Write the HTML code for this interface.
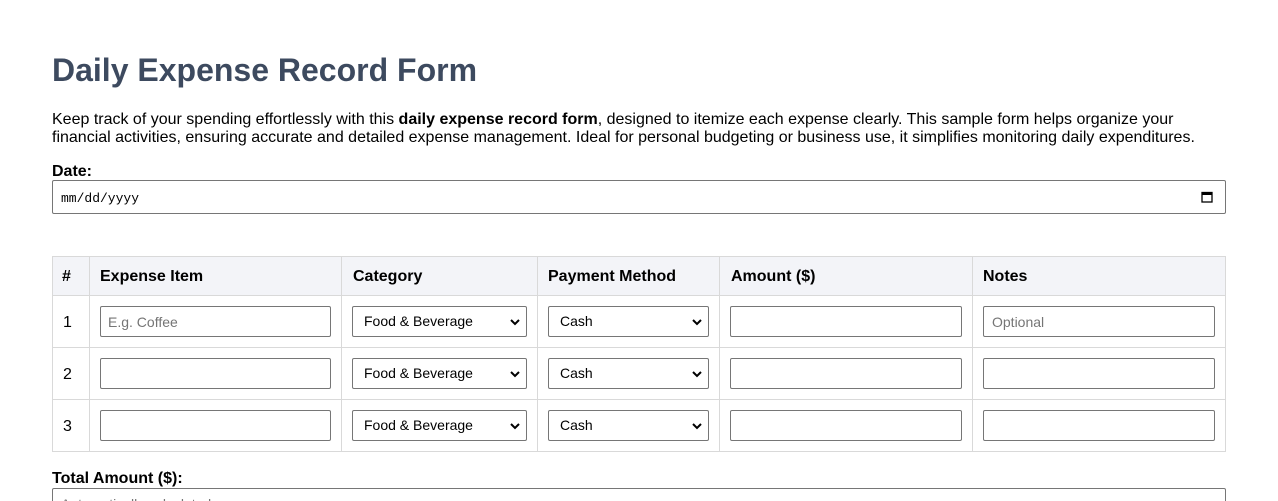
<!DOCTYPE html>
<html><head><meta charset="utf-8"><style>
*{box-sizing:border-box;margin:0;padding:0}
html,body{width:1278px;height:501px;overflow:hidden}
body{background:#fff;font-family:"Liberation Sans",Arial,sans-serif;color:#000;position:relative}
.a{position:absolute}
h1{position:absolute;left:52px;top:52px;font-size:32px;font-weight:bold;color:#3d4a5f;line-height:36px}
p.d{position:absolute;left:52px;top:111px;width:1180px;font-size:16px;line-height:18px}
.lbl{position:absolute;left:52px;font-size:16px;font-weight:bold}
.box{position:absolute;border:1px solid #767676;border-radius:2px;background:#fff;font-size:14px;color:#000}
.ph{color:#757575}
.sel{position:absolute;border:1px solid #767676;border-radius:2px;background:#fff;font-size:14px;padding-left:11px;line-height:29px;height:31px}
.sel svg{position:absolute;right:6px;top:11px}
.hl{position:absolute;left:52px;width:1174px;height:1px;background:#d9d9d9}
.vl{position:absolute;top:256px;height:196px;width:1px;background:#d9d9d9}
.th{position:absolute;top:268px;font-size:16px;font-weight:bold}
.n{position:absolute;left:63px;font-size:16px}
</style></head><body>
<h1>Daily Expense Record Form</h1>
<p class="d">Keep track of your spending effortlessly with this <b>daily expense record form</b>, designed to itemize each expense clearly. This sample form helps organize your financial activities, ensuring accurate and detailed expense management. Ideal for personal budgeting or business use, it simplifies monitoring daily expenditures.</p>
<div class="lbl" style="top:163px">Date:</div>
<div class="box" style="left:52px;top:180px;width:1174px;height:34px;font-family:'Liberation Mono',monospace;font-size:13px;padding:10px 0 0 8px">mm/dd/yyyy
<svg class="a" style="right:12px;top:10px" width="12" height="12" viewBox="0 0 12 12"><rect x="1" y="1.5" width="10" height="9.5" fill="none" stroke="#000" stroke-width="1.3"/><rect x="1" y="1.5" width="10" height="2.5" fill="#000"/></svg></div>

<div class="a" style="left:52px;top:256px;width:1174px;height:39px;background:#f3f4f8"></div>
<div class="hl" style="top:256px"></div><div class="hl" style="top:295px"></div><div class="hl" style="top:347px"></div><div class="hl" style="top:399px"></div><div class="hl" style="top:451px"></div>
<div class="vl" style="left:52px"></div><div class="vl" style="left:89px"></div><div class="vl" style="left:341px"></div><div class="vl" style="left:537px"></div><div class="vl" style="left:719px"></div><div class="vl" style="left:972px"></div><div class="vl" style="left:1225px"></div>
<div class="th" style="left:62px">#</div><div class="th" style="left:100px">Expense Item</div><div class="th" style="left:353px">Category</div><div class="th" style="left:548px">Payment Method</div><div class="th" style="left:731px">Amount ($)</div><div class="th" style="left:983px">Notes</div>

<div class="n" style="top:314px">1</div><div class="n" style="top:366px">2</div><div class="n" style="top:418px">3</div>

<div class="box" style="left:100px;top:306px;width:231px;height:31px;padding:7px 0 0 7px"><span class="ph">E.g. Coffee</span></div>
<div class="box" style="left:100px;top:358px;width:231px;height:31px"></div>
<div class="box" style="left:100px;top:410px;width:231px;height:31px"></div>

<div class="sel" style="left:352px;top:306px;width:175px">Food &amp; Beverage<svg width="10" height="8" viewBox="0 0 10 8"><path d="M1 2l4 4 4-4" fill="none" stroke="#000" stroke-width="2"/></svg></div>
<div class="sel" style="left:352px;top:358px;width:175px">Food &amp; Beverage<svg width="10" height="8" viewBox="0 0 10 8"><path d="M1 2l4 4 4-4" fill="none" stroke="#000" stroke-width="2"/></svg></div>
<div class="sel" style="left:352px;top:410px;width:175px">Food &amp; Beverage<svg width="10" height="8" viewBox="0 0 10 8"><path d="M1 2l4 4 4-4" fill="none" stroke="#000" stroke-width="2"/></svg></div>

<div class="sel" style="left:548px;top:306px;width:161px">Cash<svg width="10" height="8" viewBox="0 0 10 8"><path d="M1 2l4 4 4-4" fill="none" stroke="#000" stroke-width="2"/></svg></div>
<div class="sel" style="left:548px;top:358px;width:161px">Cash<svg width="10" height="8" viewBox="0 0 10 8"><path d="M1 2l4 4 4-4" fill="none" stroke="#000" stroke-width="2"/></svg></div>
<div class="sel" style="left:548px;top:410px;width:161px">Cash<svg width="10" height="8" viewBox="0 0 10 8"><path d="M1 2l4 4 4-4" fill="none" stroke="#000" stroke-width="2"/></svg></div>

<div class="box" style="left:730px;top:306px;width:232px;height:31px"></div>
<div class="box" style="left:730px;top:358px;width:232px;height:31px"></div>
<div class="box" style="left:730px;top:410px;width:232px;height:31px"></div>

<div class="box" style="left:983px;top:306px;width:232px;height:31px;padding:7px 0 0 8px"><span class="ph">Optional</span></div>
<div class="box" style="left:983px;top:358px;width:232px;height:31px"></div>
<div class="box" style="left:983px;top:410px;width:232px;height:31px"></div>

<div class="lbl" style="top:470px">Total Amount ($):</div>
<div class="box" style="left:52px;top:488px;width:1174px;height:34px;padding:7px 0 0 8px"><span class="ph">Automatically calculated</span></div>
</body></html>
